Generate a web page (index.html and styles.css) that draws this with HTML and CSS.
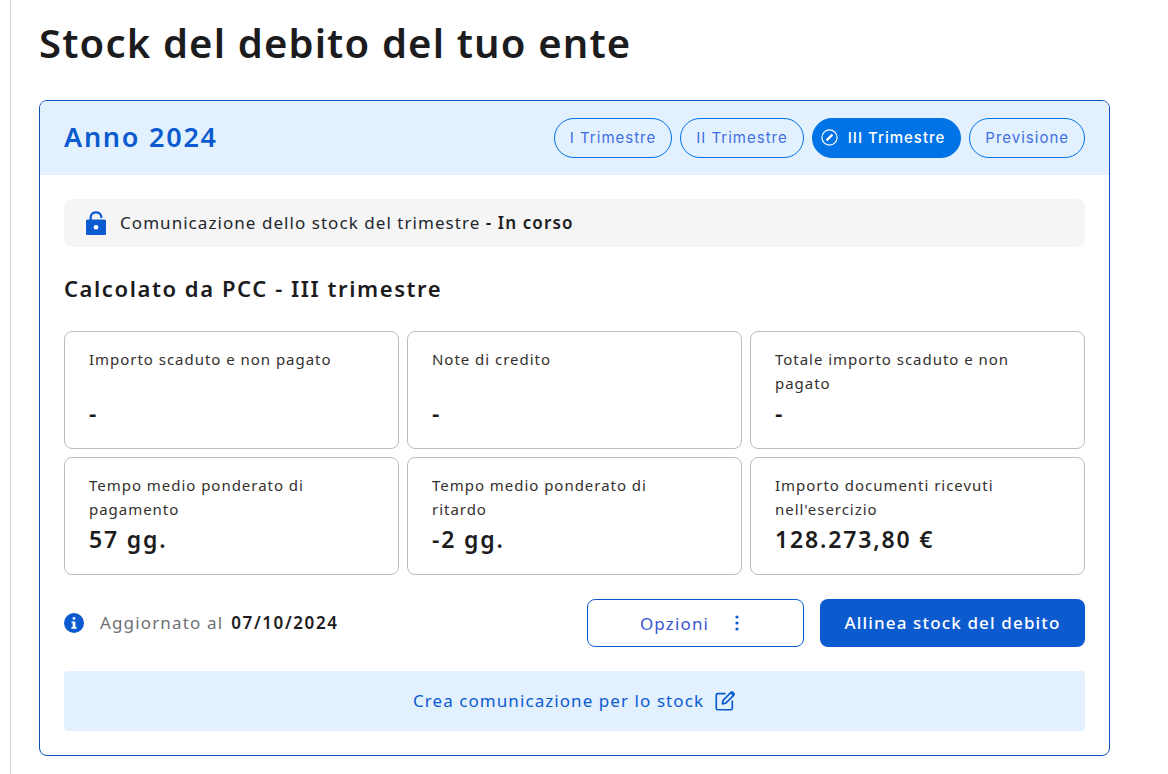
FILE: index.html
```html
<!DOCTYPE html>
<html lang="it">
<head>
<meta charset="utf-8">
<title>Stock del debito</title>
<link rel="stylesheet" href="styles.css">
</head>
<body>
<div class="page">
  <div class="rail"></div>
  <main class="main">
    <h1 class="title">Stock del debito del tuo ente</h1>
    <section class="panel">
      <header class="panel-head">
        <h2 class="year">Anno 2024</h2>
        <nav class="tabs">
          <button class="tab">I Trimestre</button>
          <button class="tab">II Trimestre</button>
          <button class="tab tab-active">
            <svg class="tab-icon" viewBox="0 0 17 17" fill="none" stroke="currentColor"><circle cx="8.5" cy="8.5" r="7.6" stroke-width="1.2"/><path d="M5.6 11.4 11.4 5.6" stroke-width="2.2"/></svg>
            III Trimestre
          </button>
          <button class="tab">Previsione</button>
        </nav>
      </header>
      <div class="panel-body">
        <div class="notice">
          <svg class="lock" viewBox="0 0 20 25"><path d="M4.7 10V6.5a5.5 5.5 0 0 1 10.6 0V8" fill="none" stroke="#0b5bcf" stroke-width="2.2"/><rect x="0" y="9.5" width="20" height="15.5" rx="1.5" fill="#0b5bcf"/><circle cx="10" cy="17.2" r="2.3" fill="#fff"/></svg>
          <span class="notice-text">Comunicazione dello stock del trimestre <b>- In corso</b></span>
        </div>
        <h3 class="section">Calcolato da PCC - III trimestre</h3>
        <div class="grid">
          <div class="stat"><p class="stat-label">Importo scaduto e non pagato</p><p class="stat-value">-</p></div>
          <div class="stat"><p class="stat-label">Note di credito</p><p class="stat-value">-</p></div>
          <div class="stat"><p class="stat-label">Totale importo scaduto e non pagato</p><p class="stat-value">-</p></div>
          <div class="stat"><p class="stat-label">Tempo medio ponderato di pagamento</p><p class="stat-value">57 gg.</p></div>
          <div class="stat"><p class="stat-label">Tempo medio ponderato di ritardo</p><p class="stat-value">-2 gg.</p></div>
          <div class="stat"><p class="stat-label">Importo documenti ricevuti nell'esercizio</p><p class="stat-value">128.273,80 €</p></div>
        </div>
        <div class="actions">
          <div class="updated">
            <svg class="info" viewBox="0 0 20 20"><circle cx="10" cy="10" r="10" fill="#0b5bcf"/><rect x="8.6" y="4" width="2.8" height="2.8" rx="1.4" fill="#fff"/><path d="M7.6 8.4h3.8v5.6h1.2v1.8H7.4V14h1.3v-3.8H7.6z" fill="#fff"/></svg>
            <span class="updated-label">Aggiornato al</span>
            <b class="updated-date">07/10/2024</b>
          </div>
          <button class="btn btn-outline">Opzioni
            <svg class="dots" viewBox="0 0 4 16"><circle cx="2" cy="2" r="1.6"/><circle cx="2" cy="8" r="1.6"/><circle cx="2" cy="14" r="1.6"/></svg>
          </button>
          <button class="btn btn-solid">Allinea stock del debito</button>
        </div>
        <a class="create">Crea comunicazione per lo stock
          <svg class="edit" viewBox="0 0 20 20" fill="none" stroke="#0b5bcf" stroke-width="1.6"><path d="M10 3.5H2.6A1.4 1.4 0 0 0 1.2 4.9v12.5a1.4 1.4 0 0 0 1.4 1.4h12.5a1.4 1.4 0 0 0 1.4-1.4V10"/><path d="M7 13.2 7.7 9.8 15 2.5l2.7 2.7-7.4 7.3z" stroke-linejoin="round"/><path d="M15.2 1.4a1.4 1.4 0 0 1 2 0l1.4 1.4a1.4 1.4 0 0 1 0 2l-1 1-3.4-3.4z" fill="#0b5bcf" stroke="none"/></svg>
        </a>
      </div>
    </section>
  </main>
</div>
</body>
</html>
```
FILE: styles.css
```css
* { box-sizing: border-box; }
body {
  margin: 0;
  background: #fff;
  color: #1c1c1e;
  font-family: "Noto Sans", "Open Sans", sans-serif;
}
.page { display: flex; min-height: 774px; }
.rail { width: 11px; flex: none; border-right: 1px solid #d6d6d6; }
.main { width: 1099px; padding: 0 0 0 28px; }
.title {
  margin: 0;
  padding-top: 19px;
  height: 100px;
  font-size: 40px;
  line-height: 48px;
  font-weight: 600;
  letter-spacing: 1.16px;
  color: #1c1c1e;
}
.panel {
  width: 1071px;
  border: 1px solid #0a52b8;
  border-radius: 8px;
  overflow: hidden;
}
.panel-head {
  height: 74px;
  background: #e3f1ff;
  padding: 0 24px;
  display: flex;
  align-items: center;
  justify-content: space-between;
}
.year {
  margin: 0 0 3px;
  color: #0b5bcf;
  font-size: 27px;
  font-weight: 600;
  letter-spacing: 1.75px;
}
.tabs { display: flex; gap: 8px; }
.tab {
  height: 40px;
  border: 1px solid #0073e6;
  border-radius: 20px;
  background: transparent;
  color: #3f6fe0;
  padding: 0 15px 1px;
  font-family: "Inter", sans-serif;
  font-size: 15px;
  letter-spacing: 1px;
  display: flex;
  align-items: center;
  gap: 10px;
}
.tab-active { background: #0073e6; color: #fff; padding: 0 15px 1px 8px; font-weight: 500; }
.tab-icon { width: 17px; height: 17px; }
.panel-body { padding: 24px; }
.notice {
  height: 48px;
  background: #f5f5f5;
  border-radius: 8px;
  padding: 0 22px;
  display: flex;
  align-items: center;
  gap: 14px;
}
.lock { width: 20px; height: 25px; margin-top: -1px; }
.notice-text { font-size: 17px; letter-spacing: 1.05px; color: #23272e; padding-bottom: 2px; }
.notice-text b { font-weight: 600; color: #1c1c1e; letter-spacing: 1.1px; }
.section {
  margin: 25px 0 27px;
  font-size: 22px;
  line-height: 32px;
  font-weight: 600;
  letter-spacing: 1.58px;
}
.grid {
  display: grid;
  grid-template-columns: repeat(3, 1fr);
  grid-auto-rows: 118px;
  gap: 8px;
}
.stat {
  border: 1px solid #bdbdbd;
  border-radius: 8px;
  padding: 15px 48px 0 24px;
}
.stat-label {
  margin: 0;
  height: 48px;
  font-size: 15px;
  line-height: 24px;
  letter-spacing: 0.97px;
  color: #33302e;
}
.stat-value {
  margin: 2px 0 0;
  font-size: 23px;
  line-height: 32px;
  font-weight: 600;
  letter-spacing: 1.85px;
}
.actions { display: flex; align-items: center; margin-top: 24px; height: 48px; }
.updated { flex: 1; display: flex; align-items: center; }
.info { width: 20px; height: 20px; margin-right: 16px; }
.updated-label { font-size: 17px; letter-spacing: 1.15px; color: #6f7174; margin-right: 8px; padding-bottom: 2px; }
.updated-date { font-size: 17px; font-weight: 600; letter-spacing: 1.6px; padding-bottom: 2px; }
.btn {
  height: 48px;
  border-radius: 8px;
  font-family: inherit;
  font-size: 17px;
  letter-spacing: 1.15px;
  display: flex;
  align-items: center;
  justify-content: center;
}
.btn-outline {
  width: 217px;
  margin-right: 16px;
  padding: 0 12px 0 0;
  background: #fff;
  border: 1px solid #0b5bcf;
  color: #3b55d0;
  gap: 26px;
}
.dots { width: 4px; height: 16px; fill: #0b5bcf; }
.btn-solid {
  width: 265px;
  background: #0b5bcf;
  border: 0;
  color: #fff;
  font-weight: 500;
  letter-spacing: 1.15px;
  padding-bottom: 2px;
}
.create {
  margin-top: 24px;
  height: 60px;
  padding-bottom: 2px;
  background: #e3f1ff;
  border-radius: 4px;
  display: flex;
  align-items: center;
  justify-content: center;
  gap: 11px;
  font-size: 17px;
  letter-spacing: 1.07px;
  color: #0b5bcf;
}
.edit { width: 21px; height: 21px; }
```
